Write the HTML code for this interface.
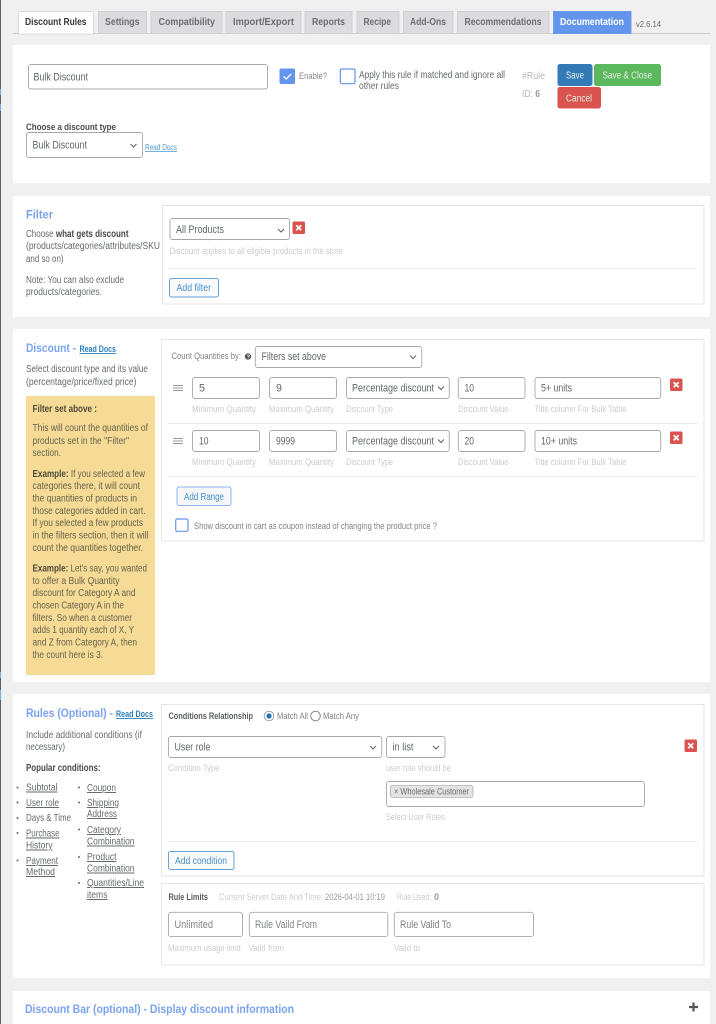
<!DOCTYPE html>
<html lang="en"><head><meta charset="utf-8"><title>Discount Rules</title>
<style>
html,body{margin:0;padding:0;width:716px;height:1024px;overflow:hidden;background:#f0f0f1}
svg{display:block;filter:blur(.35px)}
text{font-family:"Liberation Sans",sans-serif;font-size:10px;fill:#666a6e;white-space:pre}
.b{font-weight:700}
.tab{font-weight:700;font-size:10.2px;fill:#6a6c70}
.h{font-weight:700;font-size:12px;fill:#7aa3f0}
.l{font-size:9px;fill:#cccccc}
.i{font-size:10.600px;fill:#62676c}
.a{fill:#666a6e;text-decoration:underline}
.box{fill:#fff;stroke:#e4e5e6;stroke-width:1}
.in{fill:#fff;stroke:#a4a8ad;stroke-width:.9}
.ch{fill:none;stroke:#5c6268;stroke-width:1}
.x{fill:none;stroke:#fff;stroke-width:1.800}
.hr{stroke:#e8e9ea;stroke-width:1}
.bl{font-size:10px;fill:#4a8fc9}
.w{font-size:10px;fill:#e6f0e6}
.y{fill:#66624c}
</style></head><body>
<svg width="716" height="1024" viewBox="0 0 716 1024" xmlns="http://www.w3.org/2000/svg">
<rect x="0" y="0" width="716" height="1024" fill="#f0f0f1"/>
<rect x="0" y="0" width="1" height="1024" fill="#5b6067"/>
<rect x="0" y="89" width="1" height="6" fill="#72aee6"/><rect x="0" y="104" width="1" height="7" fill="#72aee6"/>
<rect x="0" y="672" width="1" height="6" fill="#72aee6"/><rect x="0" y="690" width="1" height="10" fill="#72aee6"/>

<!-- tabs -->
<line x1="13" y1="33.500" x2="710" y2="33.500" stroke="#c9cacc"/>
<rect x="18.500" y="11.500" width="75" height="22.500" fill="#fff" stroke="#dcdddf"/>
<g fill="#dcdcde" stroke="#cfd0d2"><rect x="98.500" y="11.500" width="48" height="22"/><rect x="151" y="11.500" width="71" height="22"/><rect x="226" y="11.500" width="75" height="22"/><rect x="305" y="11.500" width="47" height="22"/><rect x="357" y="11.500" width="42" height="22"/><rect x="403.500" y="11.500" width="49.500" height="22"/><rect x="457.500" y="11.500" width="91.500" height="22"/></g>
<rect x="553.500" y="11.500" width="77.500" height="22" fill="#6495ed" stroke="#6c9cf0"/>
<text class="tab" x="25" y="25" textLength="61.500" lengthAdjust="spacingAndGlyphs" style="fill:#3a3a3a">Discount Rules</text>
<text class="tab" x="105" y="25" textLength="34.500" lengthAdjust="spacingAndGlyphs">Settings</text>
<text class="tab" x="158.500" y="25" textLength="56.500" lengthAdjust="spacingAndGlyphs">Compatibility</text>
<text class="tab" x="233" y="25" textLength="61" lengthAdjust="spacingAndGlyphs">Import/Export</text>
<text class="tab" x="312" y="25" textLength="33" lengthAdjust="spacingAndGlyphs">Reports</text>
<text class="tab" x="363.500" y="25" textLength="27.500" lengthAdjust="spacingAndGlyphs">Recipe</text>
<text class="tab" x="410" y="25" textLength="36" lengthAdjust="spacingAndGlyphs">Add-Ons</text>
<text class="tab" x="464.500" y="25" textLength="77" lengthAdjust="spacingAndGlyphs">Recommendations</text>
<text class="tab" x="560" y="25" textLength="64" lengthAdjust="spacingAndGlyphs" style="fill:#fff">Documentation</text>
<text x="636" y="27" textLength="25" lengthAdjust="spacingAndGlyphs" style="font-size:8.600px">v2.6.14</text>

<!-- panels -->
<g fill="#fff"><rect x="13" y="45" width="697" height="138"/><rect x="13" y="196" width="697" height="121"/><rect x="13" y="329" width="697" height="353"/><rect x="13" y="694" width="697" height="284"/><rect x="13" y="991" width="697" height="33"/></g>

<!-- panel 1 -->
<rect class="in" x="28.500" y="64.500" width="239" height="24.500" rx="2.500"/>
<text class="i" x="33.500" y="80.500" textLength="54.500" lengthAdjust="spacingAndGlyphs">Bulk Discount</text>
<rect x="279.500" y="68.500" width="15.500" height="15.500" rx="1.500" fill="#6495ed"/>
<path d="M283.500 76.500l2.700 2.500 5-5" fill="none" stroke="#fff" stroke-width="1.300"/>
<text x="299" y="79" textLength="28" lengthAdjust="spacingAndGlyphs" style="font-size:9.200px;fill:#888">Enable?</text>
<rect x="340.300" y="69" width="14.700" height="14.700" rx="1.500" fill="#fff" stroke="#6495ed" stroke-width="1.200"/>
<text x="359" y="78" textLength="146" lengthAdjust="spacingAndGlyphs">Apply this rule if matched and ignore all</text>
<text x="359" y="89" textLength="40" lengthAdjust="spacingAndGlyphs">other rules</text>
<text x="522" y="79" textLength="23" lengthAdjust="spacingAndGlyphs" style="fill:#b8b8b8">#Rule</text>
<text x="522" y="97" textLength="18" lengthAdjust="spacingAndGlyphs" style="fill:#b8b8b8">ID: <tspan style="font-weight:700;fill:#999">6</tspan></text>
<rect x="557.500" y="64" width="35" height="22" rx="2.500" fill="#337ab7"/>
<text class="w" x="566" y="78.500" textLength="18" lengthAdjust="spacingAndGlyphs">Save</text>
<rect x="594" y="64" width="67" height="22" rx="2.500" fill="#5cb85c"/>
<text class="w" x="602.500" y="78.500" textLength="49.500" lengthAdjust="spacingAndGlyphs">Save &amp; Close</text>
<rect x="557.500" y="87" width="43.500" height="21.500" rx="2.500" fill="#d9534f"/>
<text class="w" x="566" y="101.500" textLength="26" lengthAdjust="spacingAndGlyphs">Cancel</text>
<text class="b" x="26" y="130" textLength="90" lengthAdjust="spacingAndGlyphs" style="fill:#4a4a4a;font-size:9.200px">Choose a discount type</text>
<rect class="in" x="26.500" y="132.500" width="116" height="25" rx="2.500"/>
<text class="i" x="32.500" y="148.500" textLength="54.500" lengthAdjust="spacingAndGlyphs">Bulk Discount</text>
<path class="ch" d="M130.500 144l3 3 3-3"/>
<text x="145" y="150" textLength="32" lengthAdjust="spacingAndGlyphs" style="font-size:7.800px;fill:#4f9ad2;text-decoration:underline">Read Docs</text>

<!-- panel 2 -->
<text class="h" x="26" y="218.500" textLength="27" lengthAdjust="spacingAndGlyphs">Filter</text>
<text x="26" y="237" textLength="102.500" lengthAdjust="spacingAndGlyphs">Choose <tspan class="b" style="fill:#4a4a4a">what gets discount</tspan></text>
<text x="26" y="249" textLength="134" lengthAdjust="spacingAndGlyphs">(products/categories/attributes/SKU</text>
<text x="26" y="262" textLength="37.500" lengthAdjust="spacingAndGlyphs">and so on)</text>
<text x="26" y="283" textLength="98" lengthAdjust="spacingAndGlyphs">Note: You can also exclude</text>
<text x="26" y="295" textLength="76" lengthAdjust="spacingAndGlyphs">products/categories.</text>
<rect class="box" x="162.500" y="205.500" width="541.500" height="98.500"/>
<rect class="in" x="170" y="218.500" width="119.500" height="21" rx="2.500"/>
<text class="i" x="176" y="233" textLength="48" lengthAdjust="spacingAndGlyphs">All Products</text>
<path class="ch" d="M278 229l3 3 3-3"/>
<rect x="292.500" y="221.500" width="12.500" height="12.500" rx="1.500" fill="#d9534f"/><path class="x" d="M296.200 225.200l5 5m0-5l-5 5"/>
<text class="l" x="169.500" y="254" textLength="173.500" lengthAdjust="spacingAndGlyphs">Discount applies to all eligible products in the store</text>
<line class="hr" x1="169" y1="268.500" x2="696" y2="268.500"/>
<rect x="169.500" y="278.500" width="49" height="18.500" rx="2" fill="#f8fafc" stroke="#6ba3d2"/>
<text class="bl" x="176.500" y="291" textLength="34.500" lengthAdjust="spacingAndGlyphs">Add filter</text>

<!-- panel 3 left -->
<text class="h" x="26" y="352" textLength="50" lengthAdjust="spacingAndGlyphs">Discount -</text>
<text class="b" x="79.500" y="352" textLength="36.500" lengthAdjust="spacingAndGlyphs" style="fill:#2f7dbd;font-size:9px;text-decoration:underline">Read Docs</text>
<text x="26" y="372" textLength="122" lengthAdjust="spacingAndGlyphs">Select discount type and its value</text>
<text x="26" y="385" textLength="110.500" lengthAdjust="spacingAndGlyphs">(percentage/price/fixed price)</text>
<rect x="26" y="396" width="129" height="279" fill="#f5db95"/>
<g>
<text class="b y" x="32.500" y="412" textLength="64.500" lengthAdjust="spacingAndGlyphs" style="fill:#4f4b3b">Filter set above :</text>
<text class="y" x="32.500" y="431" textLength="115.500" lengthAdjust="spacingAndGlyphs">This will count the quantities of</text>
<text class="y" x="32.500" y="444" textLength="96.500" lengthAdjust="spacingAndGlyphs">products set in the "Filter"</text>
<text class="y" x="32.500" y="456" textLength="28.500" lengthAdjust="spacingAndGlyphs">section.</text>
<text class="y" x="32.500" y="477" textLength="112.500" lengthAdjust="spacingAndGlyphs"><tspan class="b" style="fill:#4f4b3b">Example:</tspan> If you selected a few</text>
<text class="y" x="32.500" y="489" textLength="107.500" lengthAdjust="spacingAndGlyphs">categories there, it will count</text>
<text class="y" x="32.500" y="501.500" textLength="104.500" lengthAdjust="spacingAndGlyphs">the quantities of products in</text>
<text class="y" x="32.500" y="514" textLength="113" lengthAdjust="spacingAndGlyphs">those categories added in cart.</text>
<text class="y" x="32.500" y="526" textLength="110.500" lengthAdjust="spacingAndGlyphs">If you selected a few products</text>
<text class="y" x="32.500" y="538.500" textLength="116" lengthAdjust="spacingAndGlyphs">in the filters section, then it will</text>
<text class="y" x="32.500" y="551" textLength="110.500" lengthAdjust="spacingAndGlyphs">count the quantities together.</text>
<text class="y" x="32.500" y="571.500" textLength="114.500" lengthAdjust="spacingAndGlyphs"><tspan class="b" style="fill:#4f4b3b">Example:</tspan> Let's say, you wanted</text>
<text class="y" x="32.500" y="584" textLength="87" lengthAdjust="spacingAndGlyphs">to offer a Bulk Quantity</text>
<text class="y" x="32.500" y="596" textLength="103" lengthAdjust="spacingAndGlyphs">discount for Category A and</text>
<text class="y" x="32.500" y="608.500" textLength="91.500" lengthAdjust="spacingAndGlyphs">chosen Category A in the</text>
<text class="y" x="32.500" y="621" textLength="99.500" lengthAdjust="spacingAndGlyphs">filters. So when a customer</text>
<text class="y" x="32.500" y="633" textLength="101.500" lengthAdjust="spacingAndGlyphs">adds 1 quantity each of X, Y</text>
<text class="y" x="32.500" y="645.500" textLength="104.500" lengthAdjust="spacingAndGlyphs">and Z from Category A, then</text>
<text class="y" x="32.500" y="658" textLength="70.500" lengthAdjust="spacingAndGlyphs">the count here is 3.</text>
</g>

<!-- panel 3 right -->
<rect class="box" x="161.500" y="339.500" width="542.500" height="201.500"/>
<text x="171.500" y="359" textLength="69.500" lengthAdjust="spacingAndGlyphs" style="font-size:9px;fill:#808386">Count Quantities by:</text>
<circle cx="248" cy="356.500" r="3.200" fill="#555"/><text x="246.600" y="358.600" style="font-size:5.500px;font-weight:700;fill:#fff">?</text>
<rect class="in" x="255.300" y="346.500" width="166.500" height="21" rx="2.500"/>
<text class="i" x="261.500" y="360" textLength="64.500" lengthAdjust="spacingAndGlyphs">Filters set above</text>
<path class="ch" d="M410 355.500l3 3 3-3"/>

<path d="M173 385.500h10M173 388h10M173 390.500h10" stroke="#999" stroke-width="1" fill="none"/>
<rect class="in" x="192.500" y="377.500" width="67" height="21" rx="2.500"/>
<rect class="in" x="269.500" y="377.500" width="67" height="21" rx="2.500"/>
<rect class="in" x="346.500" y="377.500" width="102.800" height="21" rx="2.500"/>
<rect class="in" x="458.300" y="377.500" width="66.700" height="21" rx="2.500"/>
<rect class="in" x="535" y="377.500" width="125.700" height="21" rx="2.500"/>
<text class="i" x="199" y="391.500">5</text><text class="i" x="276" y="391.500">9</text>
<text class="i" x="352" y="391.500" textLength="82" lengthAdjust="spacingAndGlyphs">Percentage discount</text>
<path class="ch" d="M438 386.500l3 3 3-3"/>
<text class="i" x="464.500" y="391.500" textLength="9.500" lengthAdjust="spacingAndGlyphs">10</text>
<text class="i" x="541" y="391.500" textLength="31" lengthAdjust="spacingAndGlyphs">5+ units</text>
<text class="l" x="192" y="412" textLength="64" lengthAdjust="spacingAndGlyphs">Minimum Quantity</text>
<text class="l" x="269" y="412" textLength="65" lengthAdjust="spacingAndGlyphs">Maximum Quantity</text>
<text class="l" x="346" y="412" textLength="47" lengthAdjust="spacingAndGlyphs">Discount Type</text>
<text class="l" x="458" y="412" textLength="50.500" lengthAdjust="spacingAndGlyphs">Discount Value</text>
<text class="l" x="534.500" y="412" textLength="92" lengthAdjust="spacingAndGlyphs">Title column For Bulk Table</text>
<rect x="670" y="378.500" width="12.500" height="12.500" rx="1.500" fill="#d9534f"/><path class="x" d="M673.700 382.200l5 5m0-5l-5 5"/>
<line class="hr" x1="168" y1="423.500" x2="697" y2="423.500"/>

<path d="M173 438.500h10M173 441h10M173 443.500h10" stroke="#999" stroke-width="1" fill="none"/>
<rect class="in" x="192.500" y="430.500" width="67" height="21" rx="2.500"/>
<rect class="in" x="269.500" y="430.500" width="67" height="21" rx="2.500"/>
<rect class="in" x="346.500" y="430.500" width="102.800" height="21" rx="2.500"/>
<rect class="in" x="458.300" y="430.500" width="66.700" height="21" rx="2.500"/>
<rect class="in" x="535" y="430.500" width="125.700" height="21" rx="2.500"/>
<text class="i" x="199" y="444.500" textLength="9.500" lengthAdjust="spacingAndGlyphs">10</text>
<text class="i" x="276" y="444.500" textLength="19" lengthAdjust="spacingAndGlyphs">9999</text>
<text class="i" x="352" y="444.500" textLength="82" lengthAdjust="spacingAndGlyphs">Percentage discount</text>
<path class="ch" d="M438 439.500l3 3 3-3"/>
<text class="i" x="464.500" y="444.500" textLength="9.500" lengthAdjust="spacingAndGlyphs">20</text>
<text class="i" x="541" y="444.500" textLength="36" lengthAdjust="spacingAndGlyphs">10+ units</text>
<text class="l" x="192" y="465" textLength="64" lengthAdjust="spacingAndGlyphs">Minimum Quantity</text>
<text class="l" x="269" y="465" textLength="65" lengthAdjust="spacingAndGlyphs">Maximum Quantity</text>
<text class="l" x="346" y="465" textLength="47" lengthAdjust="spacingAndGlyphs">Discount Type</text>
<text class="l" x="458" y="465" textLength="50.500" lengthAdjust="spacingAndGlyphs">Discount Value</text>
<text class="l" x="534.500" y="465" textLength="92" lengthAdjust="spacingAndGlyphs">Title column For Bulk Table</text>
<rect x="670" y="431.500" width="12.500" height="12.500" rx="1.500" fill="#d9534f"/><path class="x" d="M673.700 435.200l5 5m0-5l-5 5"/>
<line class="hr" x1="168" y1="476.500" x2="697" y2="476.500"/>
<rect x="177" y="487" width="54" height="18.500" rx="2" fill="#f4f6f8" stroke="#8fb2ea"/>
<text class="bl" x="184" y="500" textLength="40" lengthAdjust="spacingAndGlyphs">Add Range</text>
<rect x="175.700" y="519" width="12.300" height="12.300" rx="1.500" fill="#fff" stroke="#6495ed" stroke-width="1.200"/>
<text x="194" y="529" textLength="243" lengthAdjust="spacingAndGlyphs" style="font-size:9px;fill:#808386">Show discount in cart as coupon instead of changing the product price ?</text>

<!-- panel 4 left -->
<text class="h" x="26" y="717" textLength="87" lengthAdjust="spacingAndGlyphs">Rules (Optional) -</text>
<text class="b" x="116" y="717" textLength="37" lengthAdjust="spacingAndGlyphs" style="fill:#2f7dbd;font-size:9px;text-decoration:underline">Read Docs</text>
<text x="26" y="738" textLength="116" lengthAdjust="spacingAndGlyphs">Include additional conditions (if</text>
<text x="26" y="750" textLength="39" lengthAdjust="spacingAndGlyphs">necessary)</text>
<text class="b" x="26" y="771" textLength="74.500" lengthAdjust="spacingAndGlyphs" style="fill:#4a4a4a">Popular conditions:</text>
<g fill="#666"><circle cx="17.500" cy="787.500" r="1"/><circle cx="17.500" cy="802.500" r="1"/><circle cx="17.500" cy="818" r="1"/><circle cx="17.500" cy="833" r="1"/><circle cx="17.500" cy="860.500" r="1"/><circle cx="79" cy="787.500" r="1"/><circle cx="79" cy="802.500" r="1"/><circle cx="79" cy="829.500" r="1"/><circle cx="79" cy="857" r="1"/><circle cx="79" cy="883" r="1"/></g>
<text class="a" x="26" y="790.500" textLength="31.500" lengthAdjust="spacingAndGlyphs">Subtotal</text>
<text class="a" x="26" y="806" textLength="33" lengthAdjust="spacingAndGlyphs">User role</text>
<text x="26" y="821" textLength="45" lengthAdjust="spacingAndGlyphs">Days &amp; Time</text>
<text class="a" x="26" y="836.500" textLength="33.500" lengthAdjust="spacingAndGlyphs">Purchase</text>
<text class="a" x="26" y="848.500" textLength="26.500" lengthAdjust="spacingAndGlyphs">History</text>
<text class="a" x="26" y="864" textLength="32" lengthAdjust="spacingAndGlyphs">Payment</text>
<text class="a" x="26" y="875" textLength="29" lengthAdjust="spacingAndGlyphs">Method</text>
<text class="a" x="87" y="791" textLength="29" lengthAdjust="spacingAndGlyphs">Coupon</text>
<text class="a" x="87" y="806" textLength="32" lengthAdjust="spacingAndGlyphs">Shipping</text>
<text class="a" x="87" y="817" textLength="30" lengthAdjust="spacingAndGlyphs">Address</text>
<text class="a" x="87" y="833" textLength="34" lengthAdjust="spacingAndGlyphs">Category</text>
<text class="a" x="87" y="844.500" textLength="47.500" lengthAdjust="spacingAndGlyphs">Combination</text>
<text class="a" x="87" y="860" textLength="29.500" lengthAdjust="spacingAndGlyphs">Product</text>
<text class="a" x="87" y="871.500" textLength="47.500" lengthAdjust="spacingAndGlyphs">Combination</text>
<text class="a" x="87" y="886" textLength="57" lengthAdjust="spacingAndGlyphs">Quantities/Line</text>
<text class="a" x="87" y="898" textLength="20.500" lengthAdjust="spacingAndGlyphs">items</text>

<!-- panel 4 right -->
<rect class="box" x="161.500" y="704.500" width="542.500" height="171.500"/>
<text class="b" x="168.500" y="719" textLength="84.500" lengthAdjust="spacingAndGlyphs" style="fill:#5a5d60;font-size:9.200px">Conditions Relationship</text>
<circle cx="269" cy="716" r="4.800" fill="#fff" stroke="#9a9da1" stroke-width=".9"/><circle cx="269" cy="716" r="2.600" fill="#2271b1"/>
<text x="277" y="719" textLength="31" lengthAdjust="spacingAndGlyphs" style="font-size:9px;fill:#808386">Match All</text>
<circle cx="315.500" cy="716" r="4.800" fill="#fff" stroke="#777b80" stroke-width=".9"/>
<text x="323" y="719" textLength="36" lengthAdjust="spacingAndGlyphs" style="font-size:9px;fill:#808386">Match Any</text>
<rect class="in" x="168.500" y="736.500" width="213.300" height="21" rx="2.500"/>
<text class="i" x="174.500" y="750.500" textLength="36" lengthAdjust="spacingAndGlyphs">User role</text>
<path class="ch" d="M370 746l3 3 3-3"/>
<rect class="in" x="386.500" y="736.500" width="58.500" height="21" rx="2.500"/>
<text class="i" x="392.500" y="750.500" textLength="21" lengthAdjust="spacingAndGlyphs">in list</text>
<path class="ch" d="M433 746l3 3 3-3"/>
<rect x="684.500" y="739.500" width="12.500" height="12.500" rx="1.500" fill="#d9534f"/><path class="x" d="M688.200 743.200l5 5m0-5l-5 5"/>
<text class="l" x="168" y="771" textLength="51.500" lengthAdjust="spacingAndGlyphs">Condition Type</text>
<text class="l" x="386" y="771" textLength="65" lengthAdjust="spacingAndGlyphs">user role should be</text>
<rect class="in" x="386.500" y="781.500" width="258" height="25" rx="2.500"/>
<rect x="390.300" y="785.500" width="82.700" height="12" rx="2" fill="#e4e4e4" stroke="#b4b4b4" stroke-width=".8"/>
<text x="394" y="794.500" textLength="75" lengthAdjust="spacingAndGlyphs" style="font-size:9.200px">× Wholesale Customer</text>
<text class="l" x="386" y="820" textLength="59" lengthAdjust="spacingAndGlyphs">Select User Roles</text>
<line class="hr" x1="168" y1="841.500" x2="697" y2="841.500"/>
<rect x="168.500" y="851.500" width="65.500" height="18" rx="2" fill="#f8fafc" stroke="#6ba3d2"/>
<text class="bl" x="175" y="864" textLength="52" lengthAdjust="spacingAndGlyphs">Add condition</text>

<rect class="box" x="161.500" y="883.500" width="542.500" height="81.500"/>
<text class="b" x="168.500" y="900" textLength="39.500" lengthAdjust="spacingAndGlyphs" style="fill:#5a5d60;font-size:9.200px">Rule Limits</text>
<text class="l" x="219" y="900" textLength="104" lengthAdjust="spacingAndGlyphs">Current Server Date And Time:</text>
<text x="325" y="900" textLength="60" lengthAdjust="spacingAndGlyphs" style="font-size:9px;fill:#999">2026-04-01 10:19</text>
<text class="l" x="397" y="900" textLength="34" lengthAdjust="spacingAndGlyphs">Rule Used:</text>
<text class="b" x="434" y="900" style="font-size:9px;fill:#999">0</text>
<rect class="in" x="168.500" y="912.300" width="74" height="24.300" rx="2.500"/>
<rect class="in" x="249.300" y="912.300" width="138.500" height="24.300" rx="2.500"/>
<rect class="in" x="394.300" y="912.300" width="139.200" height="24.300" rx="2.500"/>
<text class="i" x="174.500" y="928" textLength="38.500" lengthAdjust="spacingAndGlyphs" style="fill:#808386">Unlimited</text>
<text class="i" x="255" y="928" textLength="62" lengthAdjust="spacingAndGlyphs" style="fill:#808386">Rule Vaild From</text>
<text class="i" x="400" y="928" textLength="51" lengthAdjust="spacingAndGlyphs" style="fill:#808386">Rule Valid To</text>
<text class="l" x="168" y="951" textLength="72.500" lengthAdjust="spacingAndGlyphs">Maximum usage limit</text>
<text class="l" x="248.500" y="951" textLength="35.500" lengthAdjust="spacingAndGlyphs">Vaild from</text>
<text class="l" x="394" y="951" textLength="26" lengthAdjust="spacingAndGlyphs">Vaild to</text>

<!-- panel 5 -->
<text class="h" x="25" y="1013" textLength="269" lengthAdjust="spacingAndGlyphs">Discount Bar (optional) - Display discount information</text>
<path d="M689 1007h9M693.500 1002.500v9" stroke="#555" stroke-width="2.200" fill="none"/>
</svg>
</body></html>
